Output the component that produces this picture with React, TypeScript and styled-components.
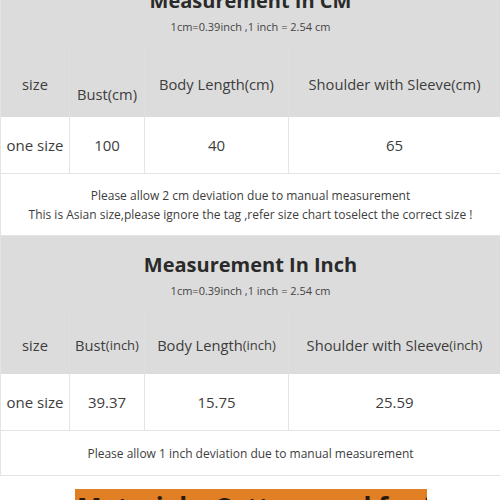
import React from 'react';
import styled, { createGlobalStyle } from 'styled-components';

const GlobalStyle = createGlobalStyle`
  html, body {
    margin: 0;
    padding: 0;
    background: #ffffff;
    overflow: hidden;
  }
  body {
    font-family: "Open Sans", "Noto Sans", "Liberation Sans", sans-serif;
    color: #333333;
  }
`;

const GRAY = '#dcdcdc';
const LINE = '#e4e4e4';

// one measurement block: caption, header row, value row and notes
const Table = styled.section<{ $shift?: number }>`
  margin-top: ${(p) => p.$shift ?? 0}px;
  border-left: 1px solid ${LINE};
`;

const Caption = styled.div`
  background: ${GRAY};
  height: 75px;
  box-sizing: border-box;
  padding-top: 17px;
  text-align: center;
`;

const Title = styled.div`
  font-size: 20px;
  line-height: 24px;
  font-weight: 700;
  color: #2a2a2a;
`;

const Sub = styled.div`
  margin-top: 6px;
  font-size: 11px;
  line-height: 16px;
  color: #444444;
`;

const Row = styled.div<{ $h: number; $gray?: boolean }>`
  display: grid;
  grid-template-columns: 69px 75px 144px 1fr;
  height: ${(p) => p.$h}px;
  background: ${(p) => (p.$gray ? GRAY : '#ffffff')};
  border-bottom: ${(p) => (p.$gray ? 'none' : `1px solid ${LINE}`)};
`;

const Cell = styled.div<{ $pt?: number; $gray?: boolean }>`
  display: flex;
  align-items: center;
  justify-content: center;
  box-sizing: border-box;
  padding-top: ${(p) => p.$pt ?? 0}px;
  font-size: ${(p) => (p.$gray ? 14.7 : 15)}px;
  color: #3d3d3d;
  white-space: nowrap;
  border-right: 1px solid ${(p) => (p.$gray ? '#dfdfdf' : LINE)};
  &:last-child {
    border-right: none;
  }
`;

const Unit = styled.span`
  font-size: 13px;
`;

const Note = styled.div<{ $h: number }>`
  height: ${(p) => p.$h}px;
  display: flex;
  flex-direction: column;
  align-items: center;
  justify-content: center;
  background: #ffffff;
  border-bottom: 1px solid ${LINE};
  font-size: 12px;
  line-height: 19px;
  color: #3d3d3d;
`;

const Banner = styled.div`
  margin: 13px 0 0 75px;
  width: 352px;
  height: 40px;
  background: #e07f24;
  padding: 3px 0 0 2px;
  box-sizing: border-box;
  font-size: 26px;
  line-height: 30px;
  font-weight: 700;
  color: #2b1a0c;
  white-space: nowrap;
  overflow: hidden;
`;

type Block = {
  title: string;
  shift?: number;
  headH: number;
  headPt: number;
  bustPt: number;
  heads: React.ReactNode[];
  values: string[];
  noteH: number;
  notes: string[];
};

const blocks: Block[] = [
  {
    title: 'Measurement In CM',
    shift: -28,
    headH: 70,
    headPt: 4,
    bustPt: 24,
    heads: ['size', 'Bust(cm)', 'Body Length(cm)', 'Shoulder with Sleeve(cm)'],
    values: ['one size', '100', '40', '65'],
    noteH: 61,
    notes: [
      'Please allow 2 cm deviation due to manual measurement',
      'This is Asian size,please ignore the tag ,refer size chart toselect the correct size !',
    ],
  },
  {
    title: 'Measurement In Inch',
    headH: 63,
    headPt: 5,
    bustPt: 5,
    heads: [
      'size',
      <>Bust<Unit>(inch)</Unit></>,
      <>Body Length<Unit>(inch)</Unit></>,
      <>Shoulder with Sleeve<Unit>(inch)</Unit></>,
    ],
    values: ['one size', '39.37', '15.75', '25.59'],
    noteH: 44,
    notes: ['Please allow 1 inch deviation due to manual measurement'],
  },
];

const App: React.FC = () => (
  <>
    <GlobalStyle />
    {blocks.map((b) => (
      <Table key={b.title} $shift={b.shift}>
        <Caption>
          <Title>{b.title}</Title>
          <Sub>1cm=0.39inch ,1 inch = 2.54 cm</Sub>
        </Caption>
        <Row $h={b.headH} $gray>
          {b.heads.map((h, i) => (
            <Cell key={i} $gray $pt={i === 1 ? b.bustPt : b.headPt}>
              {h}
            </Cell>
          ))}
        </Row>
        <Row $h={56}>
          {b.values.map((v) => (
            <Cell key={v}>{v}</Cell>
          ))}
        </Row>
        <Note $h={b.noteH}>
          {b.notes.map((n) => (
            <div key={n}>{n}</div>
          ))}
        </Note>
      </Table>
    ))}
    <Banner>Materials: Cotton used for fabric</Banner>
  </>
);

export default App;
